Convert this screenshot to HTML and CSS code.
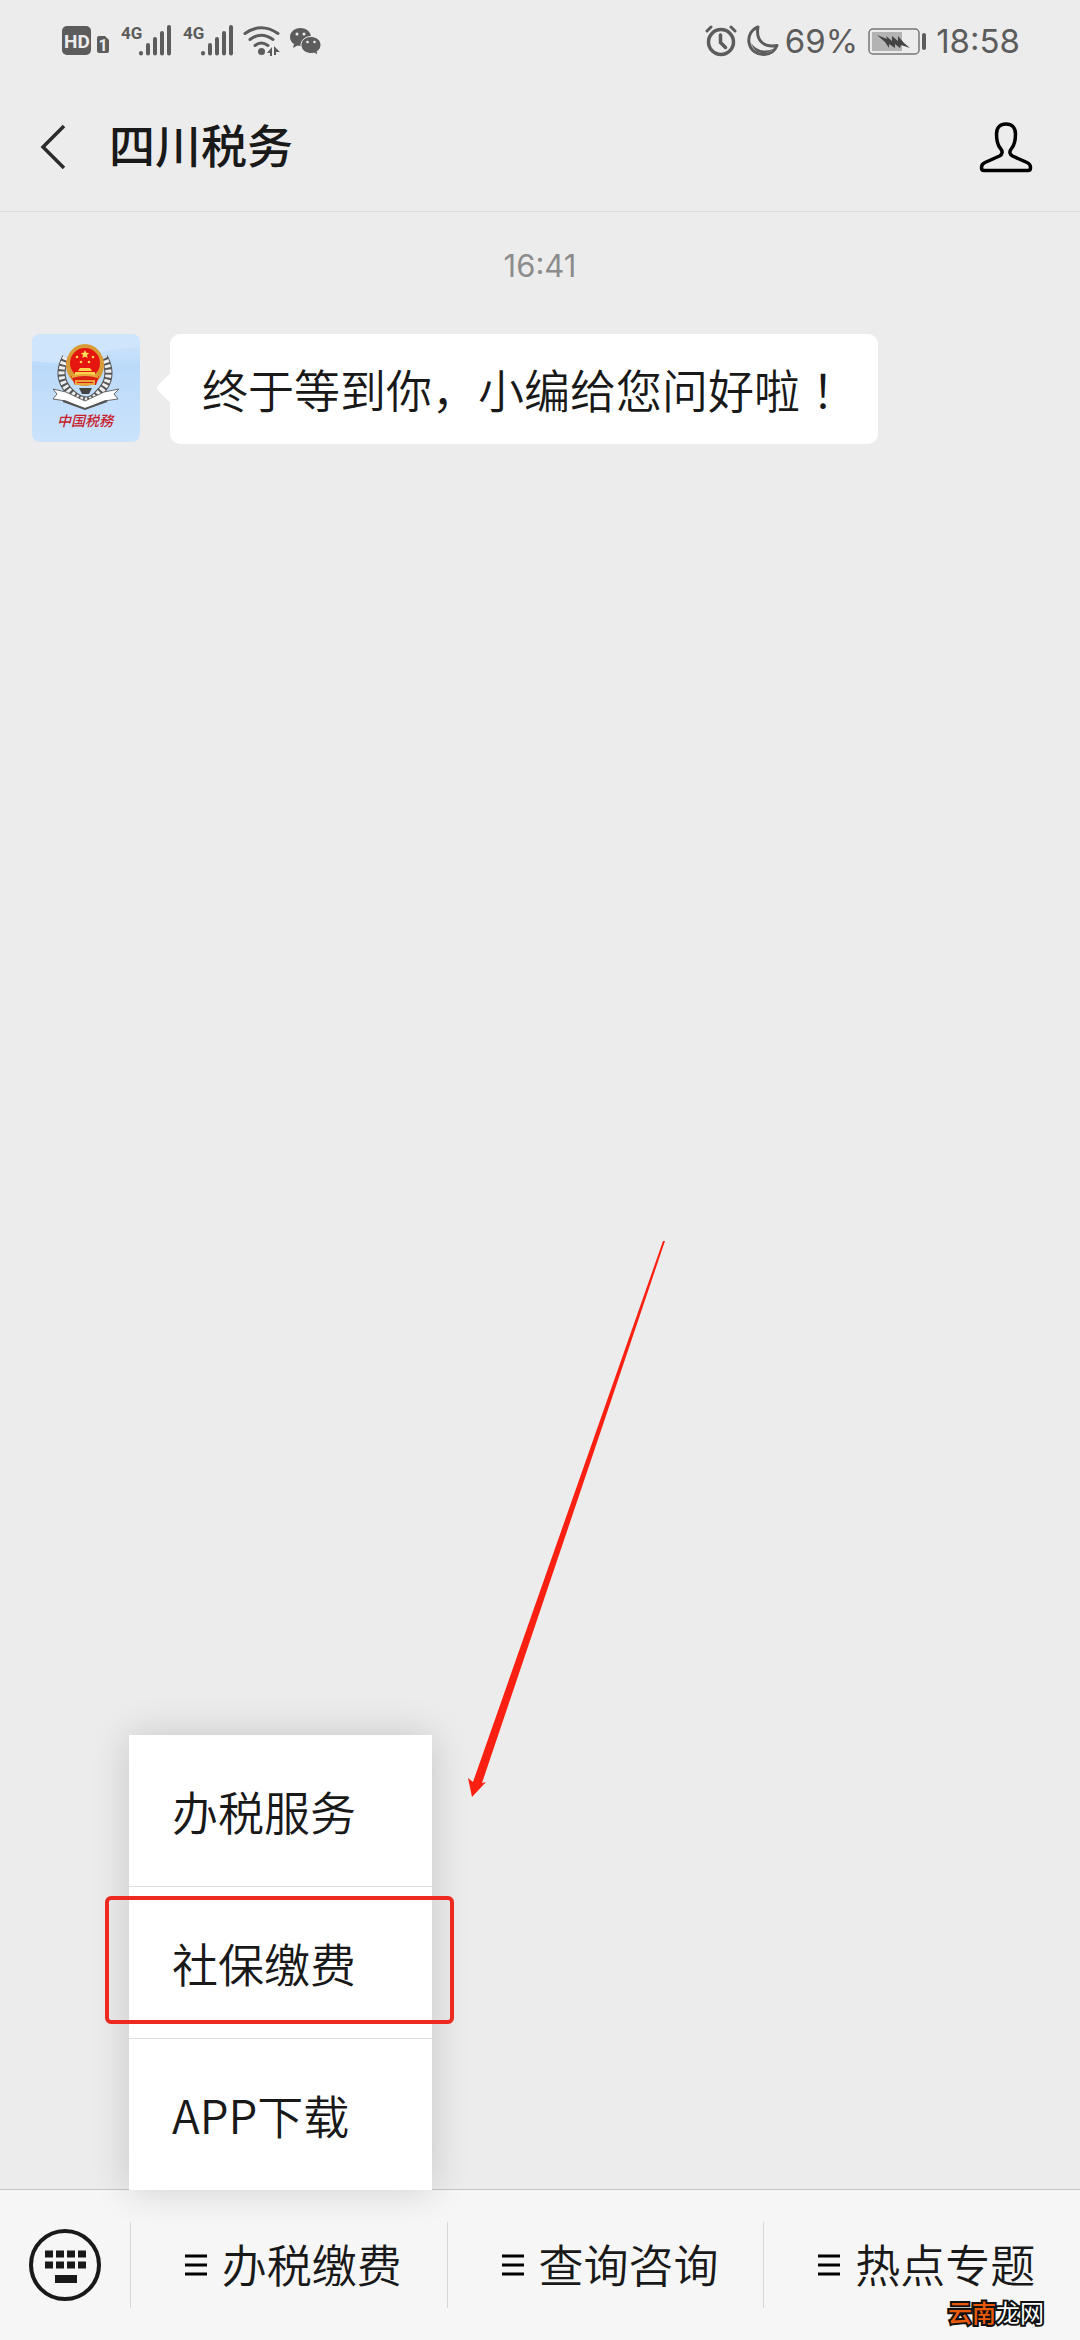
FILE: index.html
```html
<!DOCTYPE html>
<html lang="zh-CN">
<head>
    <meta charset="UTF-8">
    <meta name="viewport" content="width=device-width, initial-scale=1.0">
    <title>四川税务</title>
    <link rel="stylesheet" href="styles.css">
</head>
<body>
    <div class="status-bar">
        <div class="status-left">
            <svg class="icon" width="50" height="32" viewBox="0 0 50 32">
                <rect x="1" y="1" width="29" height="29" rx="5" fill="#5c5c5c"/>
                <text class="hd-text" x="16" y="23" text-anchor="middle">HD</text>
                <path d="M38 11h6l4 4v11q0 2-2 2h-8q-2 0-2-2V13q0-2 2-2z" fill="#5c5c5c"/>
                <text class="sim-text" x="42" y="26" text-anchor="middle">1</text>
            </svg>
            <svg class="icon signal" width="52" height="32" viewBox="0 0 52 32">
                <text class="net-text" x="0" y="14">4G</text>
                <path d="M20 28v.5M27 20v8.500M34 14v14.500M41 8v20.500M48 2v26.500" stroke="#5c5c5c" stroke-width="4" stroke-linecap="round"/>
            </svg>
            <svg class="icon signal" width="52" height="32" viewBox="0 0 52 32">
                <text class="net-text" x="0" y="14">4G</text>
                <path d="M20 28v.5M27 20v8.500M34 14v14.500M41 8v20.500M48 2v26.500" stroke="#5c5c5c" stroke-width="4" stroke-linecap="round"/>
            </svg>
            <svg class="icon wifi" width="38" height="32" viewBox="0 0 38 32">
                <path d="M2 8.500Q18 -3 35 8.500M7 14.500Q18 6 30 14.500M12 20.500Q18 15.500 25 20.500" fill="none" stroke="#5c5c5c" stroke-width="3" stroke-linecap="round"/>
                <circle cx="18.500" cy="26.500" r="3.500" fill="#5c5c5c"/>
                <path d="M29 22v9h-2v-3h-3zM31 21v9h2v-3h4z" fill="#5c5c5c"/>
            </svg>
            <svg class="icon wechat" width="32" height="32" viewBox="0 0 32 32">
                <path d="M11.500 3C5.500 3 1 7 1 12c0 3 1.500 5.500 4 7l-1 4 4.500-2.500c1 .3 2 .5 3 .5C17.500 21 22 17 22 12S17.500 3 11.500 3z" fill="#5c5c5c"/>
                <path d="M22 11.500c-5.500 0-10 3.700-10 8.500s4.500 8.500 10 8.500c1 0 2-.1 3-.4l4 2-1-3.600c2.500-1.500 4-3.800 4-6.500 0-4.800-4.500-8.500-10-8.500z" fill="#5c5c5c" stroke="#ececec"/>
                <g fill="#ececec">
                    <circle cx="8" cy="9" r="1.500"/><circle cx="15" cy="9" r="1.500"/>
                    <circle cx="18.500" cy="17" r="1.300"/><circle cx="25.500" cy="17" r="1.300"/>
                </g>
            </svg>
        </div>
        <div class="status-right">
            <svg class="icon" width="32" height="32" viewBox="0 0 32 32">
                <g fill="none" stroke="#5c5c5c" stroke-linecap="round">
                    <circle cx="16" cy="17" r="12.500" stroke-width="3.500"/>
                    <path d="M15.500 10v7.500l5 5" stroke-width="3.500"/>
                    <path d="M2 6l4-4M30 6l-4-4" stroke-width="3"/>
                </g>
            </svg>
            <svg class="icon moon" width="32" height="32" viewBox="0 0 32 32">
                <path d="M11 2C4 5 1 11 2 17.500 3.500 26 10.500 30 17.500 29.500 23.500 29 28 25.500 30 20.500 17 22.500 8.500 16 11 2z" fill="none" stroke="#5c5c5c" stroke-width="3" stroke-linejoin="round"/>
                <path d="M4 18Q12 29 26 24q-5 5-12 4T4 18z" fill="#5c5c5c"/>
            </svg>
            <span class="percent">69%</span>
            <svg class="icon battery" width="60" height="32" viewBox="0 0 60 32">
                <rect x="1" y="4" width="50" height="25" rx="4" fill="none" stroke="#777" stroke-width="1.500"/>
                <rect x="4" y="7" width="30" height="19" fill="#b3b3b3"/>
                <path d="M9 10l10 4-1-3 6 5v-5l6 5v-5l6 7 6 5-9-3-1 3-5-4v4l-6-4v4l-4-6z" fill="#444"/>
                <rect x="54" y="8" width="4" height="17" rx="2" fill="#5c5c5c"/>
            </svg>
            <span class="clock">18:58</span>
        </div>
    </div>

    <header class="header">
        <button class="icon-button back" aria-label="返回">
            <svg width="28" height="48" viewBox="0 0 28 48">
                <path d="M25 3L4 24l21 21" fill="none" stroke="#2b2b2b" stroke-width="3.500"/>
            </svg>
        </button>
        <h1 class="title">四川税务</h1>
        <button class="icon-button" aria-label="账号资料">
            <svg width="54" height="52" viewBox="0 0 54 52">
                <path d="M27 3c-6 0-9.500 4-9.500 10 0 7 1 11 4 14.500 2.500 3 2 6-1 7.500L6 41.500Q2.500 43 2.500 46.500V47q0 2.500 2.500 2.500h44q2.500 0 2.500-2.500v-.5q0-3.500-3.500-5L33.500 35c-3-1.500-3.500-4.500-1-7.500 3-3.500 4-7.500 4-14.500 0-6-3.500-10-9.500-10z" fill="none" stroke="#000" stroke-width="3.500" stroke-linejoin="round"/>
            </svg>
        </button>
    </header>

    <main class="chat">
        <time class="chat-time">16:41</time>
        <div class="message">
            <svg class="avatar" viewBox="0 0 108 108" role="img" aria-label="中国税务">
                <defs>
                    <linearGradient id="sky" x1="0" y1="0" x2="0" y2="1">
                        <stop offset="0" stop-color="#d3e8fc"/>
                        <stop offset="0.300" stop-color="#bbdafa"/>
                        <stop offset="1" stop-color="#cbe3fb"/>
                    </linearGradient>
                </defs>
                <rect width="108" height="108" fill="url(#sky)"/>
                <path d="M0 0h108v14Q82 12 60 22T0 27z" fill="#cfe5fc"/>
                <!-- wheat ears -->
                <path d="M34 23Q23 44 39 59t28 0Q83 44 72 23" fill="none" stroke="#555" stroke-width="8"/>
                <path d="M34 23Q23 44 39 59t28 0Q83 44 72 23" fill="none" stroke="#eee" stroke-width="6" stroke-dasharray="3 2"/>
                <!-- ribbon -->
                <path d="M21 55l13 3 19 9 19-9 15-3-5 5 4 5-14 2-19 8-19-8-13-2 4-5z" fill="#fff" stroke="#666"/>
                <path d="M31 67l22 8 22-8" fill="none" stroke="#555" stroke-width="2"/>
                <path d="M47 54h13l-3 6h-7z" fill="#444"/>
                <!-- emblem -->
                <ellipse cx="53" cy="31" rx="19" ry="21" fill="#d99b35"/>
                <circle cx="53" cy="29" r="15" fill="#e5150f"/>
                <path d="M39 42h28l-3 9H43z" fill="#d91e12"/>
                <path d="M53 16l1.200 2.800 3 .2-2.300 2 .8 3-2.700-1.600-2.700 1.600.8-3-2.300-2 3-.2z" fill="#ffe25c"/>
                <g fill="#ffd34d">
                    <circle cx="45" cy="23" r="1.300"/><circle cx="61" cy="23" r="1.300"/>
                    <circle cx="49" cy="28" r="1.300"/><circle cx="57" cy="28" r="1.300"/>
                    <path d="M48 34h10l2 3H46zM43 38h20v3H43z"/>
                </g>
                <path d="M40 43q13-4 26 0M44 47h18v3H44z" fill="none" stroke="#e9a63a" stroke-width="2"/>
                <text class="avatar-text" x="53" y="92" text-anchor="middle">中国税務</text>
            </svg>
            <p class="bubble">终于等到你，小编给您问好啦<span class="mark" lang="zh-TW">！</span></p>
        </div>
    </main>

    <nav class="footer">
        <button class="icon-button keyboard" aria-label="键盘">
            <svg width="74" height="74" viewBox="0 0 74 74">
                <circle cx="37" cy="37" r="34" fill="none" stroke="#191919" stroke-width="4"/>
                <path d="M17 26h41M17 37h41" stroke="#191919" stroke-width="7" stroke-dasharray="8 3"/>
                <path d="M27 51h22" stroke="#191919" stroke-width="8"/>
            </svg>
        </button>
        <div class="tab">
            <button class="tab-button">
                <svg class="lines" width="22" height="22" viewBox="0 0 22 22">
                    <path d="M0 2h22M0 11h22M0 20h22" stroke="#000" stroke-width="3"/>
                </svg>
                <span class="tab-label">办税缴费</span>
            </button>
            <ul class="menu">
                <li><a href="#">办税服务</a></li>
                <li class="marked"><a href="#">社保缴费</a></li>
                <li><a href="#">APP下载</a></li>
            </ul>
            <svg class="arrow" width="200" height="558" viewBox="0 0 200 558">
                <path d="M197 1L14 543l4-1-14 15L0 538l5 4L195 1z" fill="#fb2011"/>
            </svg>
        </div>
        <div class="tab">
            <button class="tab-button">
                <svg class="lines" width="22" height="22" viewBox="0 0 22 22">
                    <path d="M0 2h22M0 11h22M0 20h22" stroke="#000" stroke-width="3"/>
                </svg>
                <span class="tab-label">查询咨询</span>
            </button>
        </div>
        <div class="tab">
            <button class="tab-button">
                <svg class="lines" width="22" height="22" viewBox="0 0 22 22">
                    <path d="M0 2h22M0 11h22M0 20h22" stroke="#000" stroke-width="3"/>
                </svg>
                <span class="tab-label">热点专题</span>
            </button>
        </div>
        <div class="watermark"><span>云南</span>龙网</div>
    </nav>
</body>
</html>
```
FILE: styles.css
```css
* {
    box-sizing: border-box;
}

body {
    margin: 0;
    min-height: 100vh;
    display: flex;
    flex-direction: column;
    background-color: #ececec;
    color: #191919;
    font-family: "Noto Sans CJK SC", sans-serif;
    font-size: 46px;
    font-weight: 350;
}

button {
    font: inherit;
    color: inherit;
    background: none;
    border: none;
    padding: 0;
    cursor: pointer;
}

a {
    color: inherit;
    text-decoration: none;
}

svg {
    display: block;
    flex: none;
}

/* status bar */
.status-bar {
    display: flex;
    justify-content: space-between;
    align-items: center;
    height: 82px;
    padding: 0 60px 0 61px;
    color: #5c5c5c;
    font-family: Inter, sans-serif;
    font-size: 33px;
    font-weight: 400;
}

.status-left, .status-right {
    display: flex;
    align-items: center;
}

.signal {
    margin-left: 10px;
}

.wifi {
    margin-left: 8px;
}

.wechat {
    margin-left: 8px;
}

.moon {
    margin-left: 10px;
}

.percent {
    margin-left: 6px;
}

.battery {
    margin: 0 8px 0 10px;
}

.hd-text {
    font: 700 19px Roboto, sans-serif;
    fill: #ececec;
}

.sim-text {
    font: 700 16px Roboto, sans-serif;
    fill: #ececec;
}

.net-text {
    font: 700 17px Roboto, sans-serif;
    fill: #5c5c5c;
}

/* header */
.header {
    display: flex;
    align-items: center;
    height: 130px;
    padding: 0 47px 0 39px;
    border-bottom: 1px solid #dedede;
}

.title {
    flex: 1;
    margin: 0 0 8px 42px;
    font-size: 46px;
    font-weight: 500;
    line-height: 60px;
}

/* chat */
.chat {
    flex: 1;
    padding: 32px;
}

.chat-time {
    display: block;
    text-align: center;
    font-family: Inter, sans-serif;
    font-size: 31px;
    font-weight: 400;
    line-height: 44px;
    color: #8c8c8c;
}

.message {
    display: flex;
    align-items: flex-start;
    gap: 30px;
    margin-top: 46px;
}

.avatar {
    width: 108px;
    height: 108px;
    border-radius: 8px;
}

.avatar-text {
    font: italic 500 14px "Noto Sans CJK SC", sans-serif;
    fill: #c8202c;
}

.bubble {
    position: relative;
    margin: 0;
    padding: 24px 32px 26px;
    line-height: 60px;
    background-color: #fff;
    border-radius: 10px;
}

.bubble::before {
    content: "";
    position: absolute;
    top: 43px;
    left: -10px;
    width: 22px;
    height: 22px;
    background-color: #fff;
    border-radius: 4px;
    transform: rotate(45deg);
}

/* full-width mark sits in the middle of its box */
.mark {
    font-family: "Noto Sans CJK TC", sans-serif;
}

/* bottom bar */
.footer {
    position: relative;
    display: flex;
    align-items: center;
    height: 151px;
    border-top: 1px solid #c6c6c6;
    background-color: #f6f6f6;
}

.keyboard {
    padding: 0 28px;
}

.tab {
    position: relative;
    flex: 1;
    height: 100%;
    display: flex;
    align-items: center;
}

.tab-button {
    flex: 1;
    display: flex;
    justify-content: center;
    align-items: center;
    gap: 15px;
    height: 86px;
    padding-left: 9px;
    border-left: 1px solid #d8d8d8;
    font-size: 45px;
}

.tab-label {
    padding-bottom: 2px;
    line-height: 60px;
}

.menu {
    position: absolute;
    left: -1px;
    bottom: 100%;
    width: 303px;
    margin: 0;
    padding: 0;
    list-style: none;
    background-color: #fff;
    box-shadow: 0 0 36px rgba(0, 0, 0, 0.16);
}

.menu li {
    position: relative;
}

.menu li + li {
    border-top: 1px solid #dedede;
}

.menu a {
    display: block;
    padding: 45px 43px;
    line-height: 61px;
}

.marked::after {
    content: "";
    position: absolute;
    top: 9px;
    left: -24px;
    right: -22px;
    bottom: 14px;
    border: 4px solid #ee2a20;
    border-radius: 6px;
}

.arrow {
    position: absolute;
    left: 338px;
    bottom: 542px;
}

.watermark {
    position: absolute;
    right: 36px;
    bottom: 16px;
    font-size: 24px;
    font-weight: 400;
    line-height: 24px;
    color: #fff;
    -webkit-text-stroke: 4px #111;
    paint-order: stroke fill;
}

.watermark span {
    color: #e8590c;
    font-weight: 500;
}
```
